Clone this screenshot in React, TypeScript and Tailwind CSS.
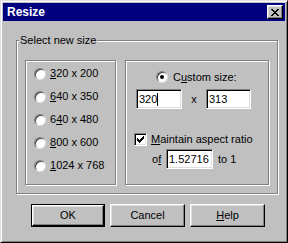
import React from "react";

const raised =
  "bg-[#c0c0c0] border border-t-white border-l-white border-r-black border-b-black shadow-[inset_-1px_-1px_0_#808080,inset_1px_1px_0_#dfdfdf]";
const sunken =
  "bg-white border border-t-[#808080] border-l-[#808080] border-r-white border-b-white shadow-[inset_1px_1px_0_#000,inset_-1px_-1px_0_#dfdfdf]";
const etched = "border border-[#808080] shadow-[inset_1px_1px_0_#fff,1px_1px_0_#fff]";

function Pixels({ rows, w, h }: { rows: string[]; w: number; h: number }) {
  const rects: React.ReactElement[] = [];
  rows.forEach((r, y) =>
    r.split("").forEach((c, x) => {
      if (c === "X") rects.push(<rect key={`${x}-${y}`} x={x} y={y} width={1} height={1} fill="#000" />);
    })
  );
  return (
    <svg width={w} height={h} viewBox={`0 0 ${w} ${h}`} shapeRendering="crispEdges">
      {rects}
    </svg>
  );
}

function Radio({ checked = false }: { checked?: boolean }) {
  return (
    <div className="w-[12px] h-[12px] shrink-0 rounded-full bg-white border border-t-[#808080] border-l-[#808080] border-r-[#dfdfdf] border-b-[#dfdfdf] shadow-[inset_1px_1px_0_#404040] flex items-center justify-center">
      {checked && <div className="w-[4px] h-[4px] rounded-full bg-black" />}
    </div>
  );
}

function U({ children }: { children: React.ReactNode }) {
  return <span className="underline underline-offset-[1px]">{children}</span>;
}

function RadioRow({ children }: { children: React.ReactNode }) {
  return (
    <div className="h-[23px] flex items-center gap-[4px]">
      <Radio />
      <span>{children}</span>
    </div>
  );
}

function Button({ children, def = false }: { children: React.ReactNode; def?: boolean }) {
  if (def) {
    return (
      <div className="w-[74px] h-[23px] border border-black">
        <div className={`${raised} w-full h-full flex items-center justify-center`}>{children}</div>
      </div>
    );
  }
  return <div className={`${raised} w-[75px] h-[23px] flex items-center justify-center`}>{children}</div>;
}

export default function App() {
  return (
    <div className="w-[288px] h-[243px] bg-[#c0c0c0] border border-t-[#dfdfdf] border-l-[#dfdfdf] border-r-black border-b-black shadow-[inset_1px_1px_0_#fff,inset_-1px_-1px_0_#808080] p-[2px] flex flex-col font-['Liberation_Sans',Arial,sans-serif] text-[11px] leading-[13px] text-black">
      <div className="h-[18px] bg-[#000080] flex items-center justify-between pl-[4px] pr-[2px]">
        <span className="text-white font-bold text-[12px]">Resize</span>
        <div className={`${raised} w-[16px] h-[14px] flex items-center justify-center`}>
          <Pixels
            w={8}
            h={7}
            rows={["XX....XX", ".XX..XX.", "..XXXX..", "...XX...", "..XXXX..", ".XX..XX.", "XX....XX"]}
          />
        </div>
      </div>

      <fieldset className={`${etched} ml-[13px] mt-[13px] w-[262px] h-[160px] px-0 pb-0`}>
        <legend className="ml-[2px] px-[1px] bg-[#c0c0c0]">Select new size</legend>
        <div className="flex gap-[9px] pl-[8px] mt-[13px]">
          <div className={`${etched} w-[91px] h-[125px] flex flex-col pt-[1px] pl-[8px]`}>
            <RadioRow>
              <U>3</U>20 x 200
            </RadioRow>
            <RadioRow>
              <U>6</U>40 x 350
            </RadioRow>
            <RadioRow>
              6<U>4</U>0 x 480
            </RadioRow>
            <RadioRow>
              <U>8</U>00 x 600
            </RadioRow>
            <RadioRow>
              <U>1</U>024 x 768
            </RadioRow>
          </div>
          <div className={`${etched} w-[144px] h-[125px] flex flex-col`}>
            <div className="h-[16px] mt-[8px] ml-[30px] flex items-center gap-[5px]">
              <Radio checked />
              <span>
                C<U>u</U>stom size:
              </span>
            </div>
            <div className="mt-[4px] ml-[10px] flex items-center">
              <div className={`${sunken} w-[46px] h-[20px] flex items-center pl-[2px]`}>
                <span>320</span>
                <span className="w-[1px] h-[13px] bg-black" />
              </div>
              <span className="w-[24px] text-center">x</span>
              <div className={`${sunken} w-[45px] h-[20px] flex items-center pl-[2px]`}>313</div>
            </div>
            <div className="mt-[24px] ml-[8px] flex items-center gap-[4px]">
              <div className={`${sunken} w-[13px] h-[13px] flex items-center justify-center`}>
                <Pixels
                  w={7}
                  h={7}
                  rows={["......X", ".....XX", "X...XXX", "XX.XXX.", "XXXXX..", ".XXX...", "..X...."]}
                />
              </div>
              <span>
                <U>M</U>aintain aspect ratio
              </span>
            </div>
            <div className="mt-[3px] ml-[26px] flex items-center">
              <span className="w-[14px]">
                o<U>f</U>
              </span>
              <div className={`${sunken} w-[47px] h-[20px] flex items-center pl-[2px]`}>1.52716</div>
              <span className="ml-[5px]">to 1</span>
            </div>
          </div>
        </div>
      </fieldset>

      <div className="mt-[10px] ml-[28px] flex gap-[5px]">
        <Button def>OK</Button>
        <Button>Cancel</Button>
        <Button>
          <U>H</U>elp
        </Button>
      </div>
    </div>
  );
}
